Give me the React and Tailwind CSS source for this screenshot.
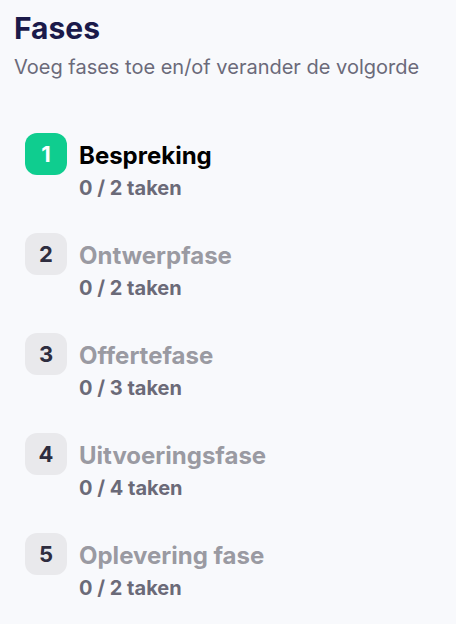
import React from "react";

const phases = [
  { nr: 1, name: "Bespreking", done: 0, total: 2, active: true },
  { nr: 2, name: "Ontwerpfase", done: 0, total: 2 },
  { nr: 3, name: "Offertefase", done: 0, total: 3 },
  { nr: 4, name: "Uitvoeringsfase", done: 0, total: 4 },
  { nr: 5, name: "Oplevering fase", done: 0, total: 2 },
];

const App = () => {
  return (
    <div
      className="min-h-screen w-full bg-[#f8f9fc] px-[14px] pt-[10px]"
      style={{ fontFamily: "Inter, 'Noto Sans', sans-serif" }}
    >
      {/* Header */}
      <h1 className="text-[30px] leading-[36px] font-bold text-[#1b1a4a]">Fases</h1>
      <p className="mt-[7px] text-[20px] leading-[28px] text-[#6b6a7a]">
        Voeg fases toe en/of verander de volgorde
      </p>

      {/* Phase list */}
      <ul className="mt-[52px] pl-[11px] flex flex-col gap-[32px]">
        {phases.map((p) => (
          <li key={p.nr} className="flex items-start gap-[12px]">
            <span
              className={
                p.active
                  ? "flex justify-center items-center w-[42px] h-[42px] rounded-[12px] bg-[#0fcd8f] text-white text-[22px] font-bold"
                  : "flex justify-center items-center w-[42px] h-[42px] rounded-[12px] bg-[#e9e9ec] text-[#2e2d3f] text-[22px] font-bold"
              }
            >
              {p.nr}
            </span>
            <div className="mt-[8px]">
              <div
                className={
                  p.active
                    ? "text-[24px] leading-[30px] font-bold text-black"
                    : "text-[24px] leading-[30px] font-bold text-[#9a9aa2]"
                }
              >
                {p.name}
              </div>
              <div className="mt-[4px] text-[20px] leading-[26px] font-bold text-[#6b6a78]">
                {p.done} / {p.total} taken
              </div>
            </div>
          </li>
        ))}
      </ul>
    </div>
  );
};

export default App;
